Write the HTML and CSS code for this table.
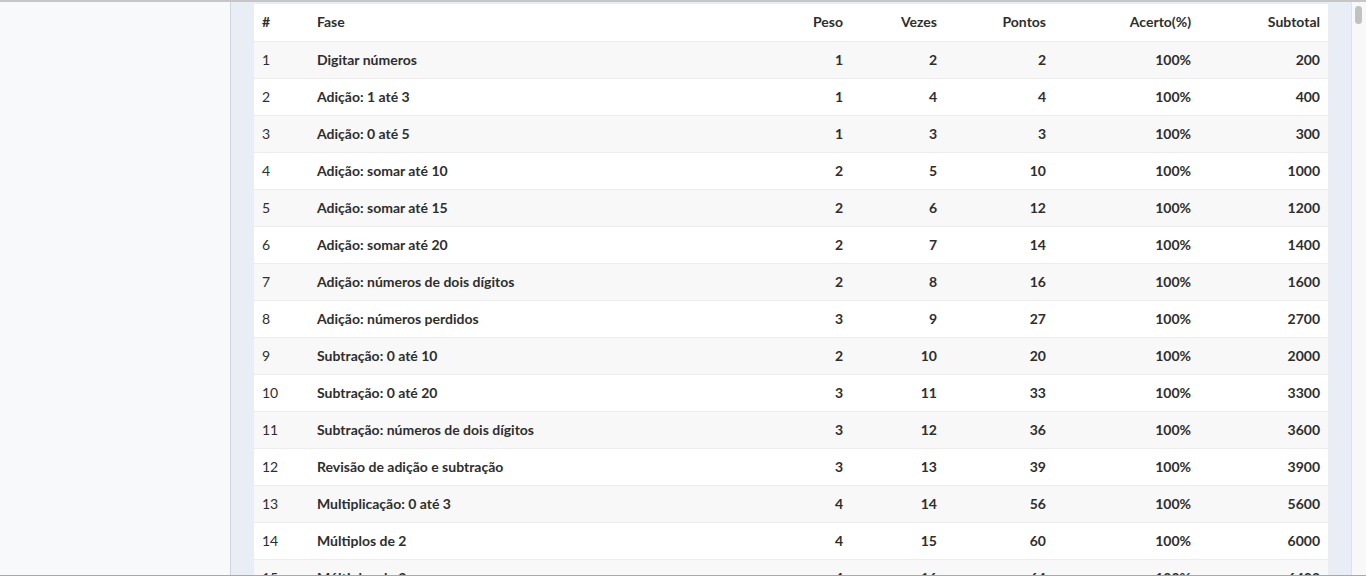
FILE: index.html
```html
<!DOCTYPE html>
<html lang="pt">
<head>
<meta charset="utf-8">
<link rel="stylesheet" href="styles.css">
</head>
<body>
<div class="frame">
  <aside class="sidebar"></aside>
  <main class="main">
    <div class="card">
      <table class="scores">
        <colgroup>
          <col class="c-num"><col class="c-fase"><col class="c-peso"><col class="c-vezes"><col class="c-pontos"><col class="c-acerto"><col class="c-sub">
        </colgroup>
        <thead>
          <tr><th class="l">#</th><th class="l">Fase</th><th>Peso</th><th>Vezes</th><th>Pontos</th><th>Acerto(%)</th><th>Subtotal</th></tr>
        </thead>
        <tbody>
          <tr><td class="n">1</td><td class="l">Digitar números</td><td>1</td><td>2</td><td>2</td><td>100%</td><td>200</td></tr>
          <tr><td class="n">2</td><td class="l">Adição: 1 até 3</td><td>1</td><td>4</td><td>4</td><td>100%</td><td>400</td></tr>
          <tr><td class="n">3</td><td class="l">Adição: 0 até 5</td><td>1</td><td>3</td><td>3</td><td>100%</td><td>300</td></tr>
          <tr><td class="n">4</td><td class="l">Adição: somar até 10</td><td>2</td><td>5</td><td>10</td><td>100%</td><td>1000</td></tr>
          <tr><td class="n">5</td><td class="l">Adição: somar até 15</td><td>2</td><td>6</td><td>12</td><td>100%</td><td>1200</td></tr>
          <tr><td class="n">6</td><td class="l">Adição: somar até 20</td><td>2</td><td>7</td><td>14</td><td>100%</td><td>1400</td></tr>
          <tr><td class="n">7</td><td class="l">Adição: números de dois dígitos</td><td>2</td><td>8</td><td>16</td><td>100%</td><td>1600</td></tr>
          <tr><td class="n">8</td><td class="l">Adição: números perdidos</td><td>3</td><td>9</td><td>27</td><td>100%</td><td>2700</td></tr>
          <tr><td class="n">9</td><td class="l">Subtração: 0 até 10</td><td>2</td><td>10</td><td>20</td><td>100%</td><td>2000</td></tr>
          <tr><td class="n">10</td><td class="l">Subtração: 0 até 20</td><td>3</td><td>11</td><td>33</td><td>100%</td><td>3300</td></tr>
          <tr><td class="n">11</td><td class="l">Subtração: números de dois dígitos</td><td>3</td><td>12</td><td>36</td><td>100%</td><td>3600</td></tr>
          <tr><td class="n">12</td><td class="l">Revisão de adição e subtração</td><td>3</td><td>13</td><td>39</td><td>100%</td><td>3900</td></tr>
          <tr><td class="n">13</td><td class="l">Multiplicação: 0 até 3</td><td>4</td><td>14</td><td>56</td><td>100%</td><td>5600</td></tr>
          <tr><td class="n">14</td><td class="l">Múltiplos de 2</td><td>4</td><td>15</td><td>60</td><td>100%</td><td>6000</td></tr>
          <tr><td class="n">15</td><td class="l">Múltiplos de 3</td><td>4</td><td>16</td><td>64</td><td>100%</td><td>6400</td></tr>
        </tbody>
      </table>
    </div>
  </main>
  <div class="scrollbar"><div class="thumb"></div></div>
</div>
</body>
</html>
```
FILE: styles.css
```css
html, body {
  margin: 0;
  padding: 0;
  height: 576px;
  overflow: hidden;
}
body {
  font-family: "Lato", "Liberation Sans", sans-serif;
  color: #2e2e2e;
  background: #fff;
}
.frame {
  height: 576px;
  box-sizing: border-box;
  border-top: 2px solid #c6c6c6;
  border-bottom: 1px solid #a9a9a9;
  display: flex;
  overflow: hidden;
}
.sidebar {
  width: 230px;
  flex: none;
  background: #f8f9fa;
  border-right: 1px solid #d2d6dc;
}
.main {
  flex: 1;
  background: #e9eef6;
  padding: 2px 23px 0 23px;
  overflow: hidden;
}
.card {
  background: #fff;
}
.scrollbar {
  width: 15px;
  flex: none;
  box-sizing: border-box;
  background: #f8f8f8;
  border-left: 1px solid #e2e2e2;
  padding: 4px 0 0 3px;
}
.thumb {
  width: 7px;
  height: 18px;
  border-radius: 4px;
  background: #c1c1c1;
}
.scores {
  width: 100%;
  border-collapse: collapse;
  table-layout: fixed;
  font-size: 14px;
}
.c-num { width: 55px; }
.c-fase { width: 472px; }
.c-peso { width: 70px; }
.c-vezes { width: 94px; }
.c-pontos { width: 109px; }
.c-acerto { width: 145px; }
.c-sub { width: 129px; }
.scores th, .scores td {
  padding: 8px;
  line-height: 20px;
  text-align: right;
  font-weight: 700;
  white-space: nowrap;
}
.scores th {
  padding-bottom: 9px;
}
.scores td {
  border-top: 1px solid #ececec;
}
.scores .l { text-align: left; }
.scores .n { text-align: left; font-weight: 400; }
.scores tbody tr:nth-child(odd) { background: #f8f8f8; }
```
